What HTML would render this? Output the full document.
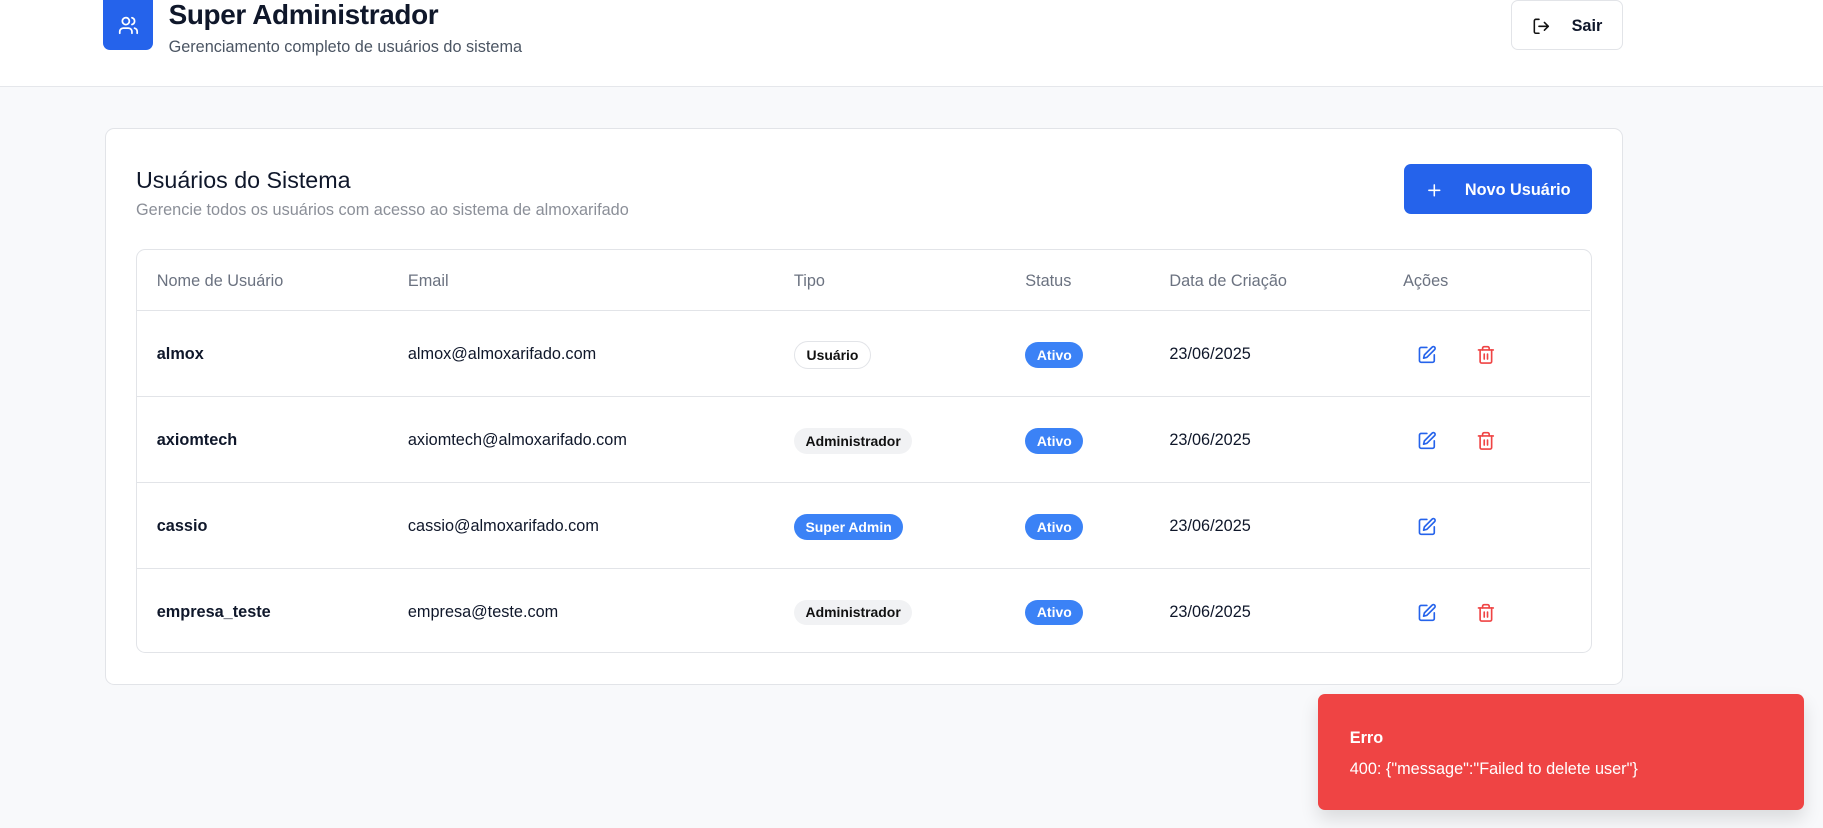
<!DOCTYPE html>
<html><head><meta charset="utf-8"><style>
*{box-sizing:border-box;margin:0;padding:0}
html,body{width:1823px;height:828px;overflow:hidden}
body{background:#f8f9fb;font-family:"Liberation Sans",sans-serif;color:#0f172a}
#w{zoom:1.1626;width:1568px;height:712px;position:relative}
.abs{position:absolute}
header{position:absolute;left:0;top:0;width:1568px;height:75px;background:#fff;border-bottom:1px solid #e5e7eb}
.logo{left:89px;top:0;width:43px;height:43px;background:#2563eb;border-radius:0 0 6px 6px;display:flex;align-items:center;justify-content:center}
.t1{left:145px;top:-1px;font-size:24px;font-weight:bold;letter-spacing:-0.3px}
.t2{left:145px;top:33px;font-size:14px;color:#4b5563}
.sair{left:1300px;top:0;width:96px;height:43px;border:1px solid #e2e4e8;border-radius:6px;background:#fff;display:flex;align-items:center;justify-content:center;gap:18px;font-weight:bold;font-size:14px;padding-top:2px}
.card{left:90px;top:110px;width:1306px;height:479px;background:#fff;border:1px solid #e2e4e8;border-radius:8px}
.h2{left:117px;top:144px;font-size:20px}
.sub{left:117px;top:173px;font-size:14px;color:#8b8f98}
.btn{left:1208px;top:141px;width:161px;height:43px;background:#2563eb;border-radius:6px;color:#fff;font-weight:bold;font-size:14px;display:flex;align-items:center;justify-content:center;gap:18px;padding-top:3px}
.tbl{left:117px;top:214px;width:1252px;height:348px;border:1px solid #e2e4e8;border-radius:8px}
.row{position:absolute;left:0;width:1250px;border-top:1px solid #e2e4e8}
.c{position:absolute;top:0;height:100%;display:flex;align-items:center;font-size:14px;padding-top:2px}
.hd .c{color:#6b7280}
.b{font-weight:bold}
.pill{border-radius:12px;padding:4px 10px;font-size:12px;font-weight:bold}
.toast{left:1134px;top:597px;width:418px;height:100px;background:#ef4444;border-radius:6px;color:#fff;box-shadow:0 8px 16px rgba(0,0,0,.12)}
</style></head><body><div id="w">
<header>
<div class="abs logo"><svg width="18" height="18" viewBox="0 0 24 24" fill="none" stroke="#fff" stroke-width="2" stroke-linecap="round" stroke-linejoin="round"><path d="M16 21v-2a4 4 0 0 0-4-4H6a4 4 0 0 0-4 4v2"/><circle cx="9" cy="7" r="4"/><path d="M22 21v-2a4 4 0 0 0-3-3.87"/><path d="M16 3.130a4 4 0 0 1 0 7.75"/></svg></div>
<div class="abs t1">Super Administrador</div>
<div class="abs t2">Gerenciamento completo de usuários do sistema</div>
<div class="abs sair"><svg width="16" height="16" viewBox="0 0 24 24" fill="none" stroke="#111" stroke-width="2" stroke-linecap="round" stroke-linejoin="round"><path d="M9 21H5a2 2 0 0 1-2-2V5a2 2 0 0 1 2-2h4"/><path d="M16 17l5-5-5-5"/><path d="M21 12H9"/></svg><span>Sair</span></div>
</header>
<div class="abs card"></div>
<div class="abs h2">Usuários do Sistema</div>
<div class="abs sub">Gerencie todos os usuários com acesso ao sistema de almoxarifado</div>
<div class="abs btn"><svg width="16" height="16" viewBox="0 0 24 24" fill="none" stroke="#fff" stroke-width="2" stroke-linecap="round"><path d="M5 12h14M12 5v14"/></svg><span>Novo Usuário</span></div>
<div class="abs tbl">
<div class="row hd" style="top:0;height:53px;border-top:none">
<div class="c" style="left:17px">Nome de Usuário</div><div class="c" style="left:233px">Email</div><div class="c" style="left:565px">Tipo</div><div class="c" style="left:764px">Status</div><div class="c" style="left:888px">Data de Criação</div><div class="c" style="left:1089px">Ações</div>
</div>
<div class="row" style="top:52px;height:74px">
<div class="c b" style="left:17px">almox</div><div class="c" style="left:233px">almox@almoxarifado.com</div><div class="c" style="left:565px"><span class="pill" style="border:1px solid #e2e4e8;color:#111">Usuário</span></div><div class="c" style="left:764px"><span class="pill" style="background:#3b82f6;color:#fff">Ativo</span></div><div class="c" style="left:888px">23/06/2025</div>
<div class="c" style="left:1101px"><svg width="17" height="17" viewBox="0 0 24 24" fill="none" stroke="#2563eb" stroke-width="2" stroke-linecap="round" stroke-linejoin="round"><path d="M12 3H5a2 2 0 0 0-2 2v14a2 2 0 0 0 2 2h14a2 2 0 0 0 2-2v-7"/><path d="M18.4 2.6a2.1 2.1 0 0 1 3 3L12 15l-4 1 1-4Z"/></svg></div>
<div class="c" style="left:1152px"><svg width="17" height="17" viewBox="0 0 24 24" fill="none" stroke="#ef4444" stroke-width="2" stroke-linecap="round" stroke-linejoin="round"><path d="M3 6h18"/><path d="M19 6v14a2 2 0 0 1-2 2H7a2 2 0 0 1-2-2V6"/><path d="M8 6V4a2 2 0 0 1 2-2h4a2 2 0 0 1 2 2v2"/><path d="M10 11v6M14 11v6"/></svg></div>
</div>
<div class="row" style="top:126px;height:74px">
<div class="c b" style="left:17px">axiomtech</div><div class="c" style="left:233px">axiomtech@almoxarifado.com</div><div class="c" style="left:565px"><span class="pill" style="background:#f1f2f4;color:#111">Administrador</span></div><div class="c" style="left:764px"><span class="pill" style="background:#3b82f6;color:#fff">Ativo</span></div><div class="c" style="left:888px">23/06/2025</div>
<div class="c" style="left:1101px"><svg width="17" height="17" viewBox="0 0 24 24" fill="none" stroke="#2563eb" stroke-width="2" stroke-linecap="round" stroke-linejoin="round"><path d="M12 3H5a2 2 0 0 0-2 2v14a2 2 0 0 0 2 2h14a2 2 0 0 0 2-2v-7"/><path d="M18.4 2.6a2.1 2.1 0 0 1 3 3L12 15l-4 1 1-4Z"/></svg></div>
<div class="c" style="left:1152px"><svg width="17" height="17" viewBox="0 0 24 24" fill="none" stroke="#ef4444" stroke-width="2" stroke-linecap="round" stroke-linejoin="round"><path d="M3 6h18"/><path d="M19 6v14a2 2 0 0 1-2 2H7a2 2 0 0 1-2-2V6"/><path d="M8 6V4a2 2 0 0 1 2-2h4a2 2 0 0 1 2 2v2"/><path d="M10 11v6M14 11v6"/></svg></div>
</div>
<div class="row" style="top:200px;height:74px">
<div class="c b" style="left:17px">cassio</div><div class="c" style="left:233px">cassio@almoxarifado.com</div><div class="c" style="left:565px"><span class="pill" style="background:#3b82f6;color:#fff">Super Admin</span></div><div class="c" style="left:764px"><span class="pill" style="background:#3b82f6;color:#fff">Ativo</span></div><div class="c" style="left:888px">23/06/2025</div>
<div class="c" style="left:1101px"><svg width="17" height="17" viewBox="0 0 24 24" fill="none" stroke="#2563eb" stroke-width="2" stroke-linecap="round" stroke-linejoin="round"><path d="M12 3H5a2 2 0 0 0-2 2v14a2 2 0 0 0 2 2h14a2 2 0 0 0 2-2v-7"/><path d="M18.4 2.6a2.1 2.1 0 0 1 3 3L12 15l-4 1 1-4Z"/></svg></div>
</div>
<div class="row" style="top:274px;height:73px">
<div class="c b" style="left:17px">empresa_teste</div><div class="c" style="left:233px">empresa@teste.com</div><div class="c" style="left:565px"><span class="pill" style="background:#f1f2f4;color:#111">Administrador</span></div><div class="c" style="left:764px"><span class="pill" style="background:#3b82f6;color:#fff">Ativo</span></div><div class="c" style="left:888px">23/06/2025</div>
<div class="c" style="left:1101px"><svg width="17" height="17" viewBox="0 0 24 24" fill="none" stroke="#2563eb" stroke-width="2" stroke-linecap="round" stroke-linejoin="round"><path d="M12 3H5a2 2 0 0 0-2 2v14a2 2 0 0 0 2 2h14a2 2 0 0 0 2-2v-7"/><path d="M18.4 2.6a2.1 2.1 0 0 1 3 3L12 15l-4 1 1-4Z"/></svg></div>
<div class="c" style="left:1152px"><svg width="17" height="17" viewBox="0 0 24 24" fill="none" stroke="#ef4444" stroke-width="2" stroke-linecap="round" stroke-linejoin="round"><path d="M3 6h18"/><path d="M19 6v14a2 2 0 0 1-2 2H7a2 2 0 0 1-2-2V6"/><path d="M8 6V4a2 2 0 0 1 2-2h4a2 2 0 0 1 2 2v2"/><path d="M10 11v6M14 11v6"/></svg></div>
</div>
</div>
<div class="abs toast">
<div class="abs" style="left:27px;top:30px;font-size:14px;font-weight:bold">Erro</div>
<div class="abs" style="left:27px;top:57px;font-size:14px">400: {"message":"Failed to delete user"}</div>
</div>
</div></body></html>
